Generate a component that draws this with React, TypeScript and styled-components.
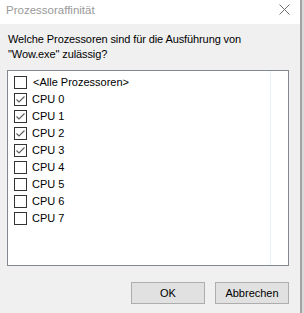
import React from "react";
import styled, { createGlobalStyle } from "styled-components";

const Global = createGlobalStyle`
  html, body { margin: 0; padding: 0; background: #f0f0f0; }
  body { font-family: "Liberation Sans", Arial, sans-serif; font-size: 11px; color: #000; }
`;

const Frame = styled.div`
  width: 304px;
  height: 313px;
  display: flex;
  background: #dadada;
`;

const Window = styled.div`
  width: 300px;
  height: 313px;
  border-right: 2px solid #a3a3a3;
  display: flex;
  flex-direction: column;
  background: #f0f0f0;
`;

const TitleBar = styled.div`
  height: 24px;
  background: #ffffff;
  display: flex;
  align-items: flex-start;
  justify-content: space-between;
  padding: 3px 10px 0 6px;
  box-sizing: border-box;
`;

const Title = styled.span`
  color: #999999;
  font-size: 11.5px;
  line-height: 14px;
`;

const CloseIcon = styled.svg`
  width: 11px;
  height: 11px;
  margin-top: 1px;
`;

const Body = styled.div`
  flex: 1;
  display: flex;
  flex-direction: column;
  padding: 8px 11px 0 8px;
`;

const Prompt = styled.p`
  margin: 0 0 8px 0;
  line-height: 15px;
  font-size: 11px;
  letter-spacing: -0.1px;
`;

const ListBox = styled.div`
  margin-left: -1px;
  height: 196px;
  border: 1px solid #828790;
  background: #ffffff;
  box-sizing: border-box;
  display: flex;
`;

const Items = styled.div`
  width: 263px;
  border-right: 1px solid #e6effa;
  padding: 3px 0 0 6px;
  box-sizing: border-box;
  display: flex;
  flex-direction: column;
`;

const Row = styled.div`
  height: 17px;
  display: flex;
  align-items: center;
  gap: 5px;
`;

const Box = styled.span`
  width: 13px;
  height: 13px;
  box-sizing: border-box;
  border: 1px solid #333333;
  background: #ffffff;
  display: flex;
  align-items: center;
  justify-content: center;
`;

const Label = styled.span<{ $shift?: number }>`
  font-size: 11px;
  line-height: 15px;
  margin-left: ${(p) => p.$shift ?? 0}px;
`;

const Buttons = styled.div`
  display: flex;
  justify-content: flex-end;
  gap: 10px;
  margin-top: 16px;
`;

const Button = styled.button`
  width: 74px;
  height: 22px;
  box-sizing: border-box;
  border: 1px solid #adadad;
  background: #e1e1e1;
  font-family: "Liberation Sans", Arial, sans-serif;
  font-size: 11px;
  color: #000;
  padding: 0;
`;

const Check = () => (
  <svg width="11" height="11" viewBox="0 0 11 11">
    <polyline points="1.5,5.5 4,8 9.5,2.5" fill="none" stroke="#5a5a5a" strokeWidth="1.1" />
  </svg>
);

const items: { label: string; checked: boolean }[] = [
  { label: "<Alle Prozessoren>", checked: false },
  { label: "CPU 0", checked: true },
  { label: "CPU 1", checked: true },
  { label: "CPU 2", checked: true },
  { label: "CPU 3", checked: true },
  { label: "CPU 4", checked: false },
  { label: "CPU 5", checked: false },
  { label: "CPU 6", checked: false },
  { label: "CPU 7", checked: false },
];

export default function App() {
  return (
    <>
      <Global />
      <Frame>
        <Window>
          <TitleBar>
            <Title>Prozessoraffinität</Title>
            <CloseIcon viewBox="0 0 11 11">
              <path d="M0.5 0.5 L10.5 10.5 M10.5 0.5 L0.5 10.5" stroke="#6f6f6f" strokeWidth="1" />
            </CloseIcon>
          </TitleBar>
          <Body>
            <Prompt>
              Welche Prozessoren sind für die Ausführung von
              <br />
              "Wow.exe" zulässig?
            </Prompt>
            <ListBox>
              <Items>
                {items.map((it, i) => (
                  <Row key={it.label}>
                    <Box>{it.checked && <Check />}</Box>
                    <Label $shift={i === 0 ? 1 : 0}>{it.label}</Label>
                  </Row>
                ))}
              </Items>
            </ListBox>
            <Buttons>
              <Button>OK</Button>
              <Button>Abbrechen</Button>
            </Buttons>
          </Body>
        </Window>
      </Frame>
    </>
  );
}
